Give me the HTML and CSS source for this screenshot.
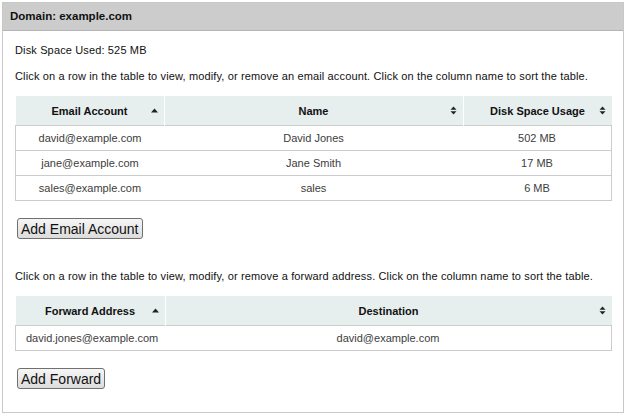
FILE: index.html
```html
<!DOCTYPE html>
<html lang="en">
<head>
  <meta charset="UTF-8">
  <title>Domain: example.com</title>
  <link rel="stylesheet" href="styles.css">
</head>
<body>

<div class="panel">
  <div class="panel-head">Domain: example.com</div>

  <div class="panel-body">
    <p>Disk Space Used: 525 MB</p>
    <p>Click on a row in the table to view, modify, or remove an email account. Click on the column name to sort the table.</p>

    <table class="grid">
      <thead>
        <tr>
          <th class="col-a">Email Account
            <svg class="sort" width="7" height="9" viewBox="0 0 7 9"><path d="M0 6.5 L3.5 2.5 L7 6.5 Z" fill="#222"/></svg>
          </th>
          <th class="col-b">Name
            <svg class="sort" width="7" height="9" viewBox="0 0 7 9"><path d="M0.5 3.8 L3.5 0.5 L6.5 3.8 Z M0.5 5.2 L3.5 8.5 L6.5 5.2 Z" fill="#222"/></svg>
          </th>
          <th class="col-a">Disk Space Usage
            <svg class="sort" width="7" height="9" viewBox="0 0 7 9"><path d="M0.5 3.8 L3.5 0.5 L6.5 3.8 Z M0.5 5.2 L3.5 8.5 L6.5 5.2 Z" fill="#222"/></svg>
          </th>
        </tr>
      </thead>
      <tbody>
        <tr><td>david@example.com</td><td>David Jones</td><td>502 MB</td></tr>
        <tr><td>jane@example.com</td><td>Jane Smith</td><td>17 MB</td></tr>
        <tr><td>sales@example.com</td><td>sales</td><td>6 MB</td></tr>
      </tbody>
    </table>

    <button class="btn">Add Email Account</button>

    <p class="gap">Click on a row in the table to view, modify, or remove a forward address. Click on the column name to sort the table.</p>

    <table class="grid">
      <thead>
        <tr>
          <th class="col-f">Forward Address
            <svg class="sort" width="7" height="9" viewBox="0 0 7 9"><path d="M0 6.5 L3.5 2.5 L7 6.5 Z" fill="#222"/></svg>
          </th>
          <th>Destination
            <svg class="sort" width="7" height="9" viewBox="0 0 7 9"><path d="M0.5 3.8 L3.5 0.5 L6.5 3.8 Z M0.5 5.2 L3.5 8.5 L6.5 5.2 Z" fill="#222"/></svg>
          </th>
        </tr>
      </thead>
      <tbody>
        <tr><td class="left">david.jones@example.com</td><td>david@example.com</td></tr>
      </tbody>
    </table>

    <button class="btn">Add Forward</button>
  </div>
</div>

</body>
</html>
```

FILE: styles.css
```css
body {
  margin: 0;
  background: #fff;
  font-family: "Liberation Sans", Arial, sans-serif;
  font-size: 11px;
  color: #111;
}

.panel {
  margin: 2px;
  border: 1px solid #c8c8c8;
  width: 622px;
  height: 411px;
  box-sizing: border-box;
}

.panel-head {
  height: 27px;
  line-height: 27px;
  padding: 0 7px;
  background-color: #cccccc;
  border-bottom: 1px solid #b4b4b4;
  font-size: 11.5px;
  font-weight: bold;
  color: #111;
}

.panel-body {
  padding: 13px 11px 0 12px;
}

p {
  margin: 0 0 13px 0;
  line-height: 13px;
  letter-spacing: 0.14px;
}

p.gap {
  margin-top: 31px;
}

.grid {
  width: 100%;
  border-collapse: collapse;
  margin-bottom: 17px;
}

.grid th {
  position: relative;
  height: 29px;
  padding: 0 20px;
  background-color: #e6eeee;
  border-left: 1px solid #fff;
  font-weight: bold;
  font-size: 11px;
  color: #111;
  text-align: center;
}

.grid th:first-child {
  border-left: none;
}

.col-a {
  width: 108px;
}

.col-f {
  width: 109px;
}

.sort {
  position: absolute;
  right: 6px;
  top: 10px;
}

.grid td {
  height: 24px;
  padding: 0;
  border: 1px solid #cccccc;
  border-left: none;
  border-right: none;
  text-align: center;
  color: #3d3d3d;
}

.grid td:first-child {
  border-left: 1px solid #cccccc;
}

.grid td:last-child {
  border-right: 1px solid #cccccc;
}

.grid td.left {
  text-align: left;
  padding-left: 10px;
}

.btn {
  display: block;
  height: 21px;
  padding: 0 3px;
  margin-left: 2px;
  font-family: "Liberation Sans", Arial, sans-serif;
  font-size: 14px;
  color: #111;
  background: linear-gradient(#f6f6f6, #dcdcdc);
  border: 1px solid #707070;
  border-radius: 3px;
}
```
